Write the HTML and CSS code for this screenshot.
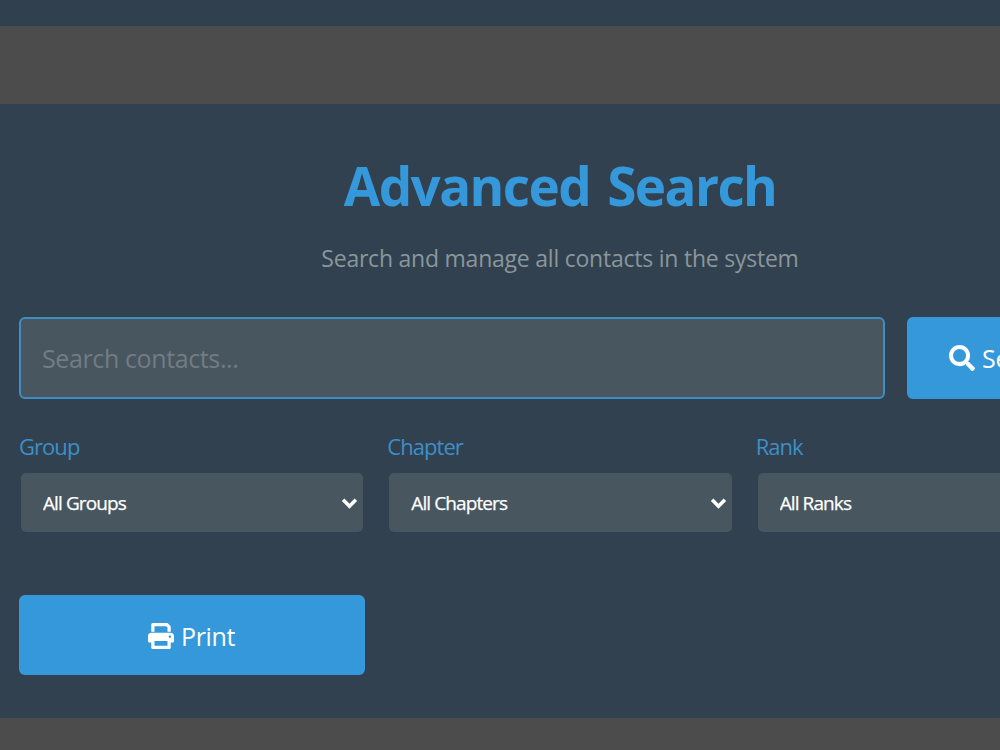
FILE: index.html
```html
<!DOCTYPE html>
<html lang="en">
<head>
    <meta charset="UTF-8">
    <meta name="viewport" content="width=device-width, initial-scale=1.0">
    <title>Advanced Search</title>
    <link rel="stylesheet" href="styles.css">
</head>
<body>
    <div class="top-bar"></div>
    <div class="search-section">
        <div class="search-container">
            <h1>Advanced Search</h1>
            <p class="subtitle">Search and manage all contacts in the system</p>
            <div class="search-bar">
                <input type="text" class="search-input" placeholder="Search contacts...">
                <button class="btn search-btn">
                    <svg class="icon" viewBox="0 0 512 512"><path d="M505 442.7L405.3 343c-4.5-4.5-10.6-7-17-7H372c27.6-35.3 44-79.7 44-128C416 93.1 322.9 0 208 0S0 93.1 0 208s93.1 208 208 208c48.3 0 92.7-16.4 128-44v16.3c0 6.4 2.5 12.5 7 17l99.7 99.7c9.4 9.4 24.6 9.4 33.9 0l28.3-28.3c9.4-9.4 9.4-24.6.1-34zM208 336c-70.7 0-128-57.2-128-128 0-70.7 57.2-128 128-128 70.7 0 128 57.2 128 128 0 70.7-57.2 128-128 128z"/></svg>
                    <span>Search</span>
                </button>
            </div>
            <div class="filters">
                <div class="filter-group">
                    <label for="group">Group</label>
                    <div class="select-wrap">
                        <select id="group"><option>All Groups</option></select>
                        <svg class="chevron" viewBox="0 0 16 11"><path d="M2 2.5l6 6 6-6"/></svg>
                    </div>
                </div>
                <div class="filter-group">
                    <label for="chapter">Chapter</label>
                    <div class="select-wrap">
                        <select id="chapter"><option>All Chapters</option></select>
                        <svg class="chevron" viewBox="0 0 16 11"><path d="M2 2.5l6 6 6-6"/></svg>
                    </div>
                </div>
                <div class="filter-group">
                    <label for="rank">Rank</label>
                    <div class="select-wrap">
                        <select id="rank"><option>All Ranks</option></select>
                        <svg class="chevron" viewBox="0 0 16 11"><path d="M2 2.5l6 6 6-6"/></svg>
                    </div>
                </div>
            </div>
            <button class="btn print-btn">
                <svg class="icon" viewBox="0 0 512 512"><path d="M448 192H64C28.65 192 0 220.7 0 256v96c0 17.67 14.33 32 32 32h32v96c0 17.67 14.33 32 32 32h320c17.67 0 32-14.33 32-32v-96h32c17.67 0 32-14.33 32-32V256C512 220.7 483.3 192 448 192zM384 448H128v-96h256V448zM432 296c-13.25 0-24-10.75-24-24c0-13.27 10.75-24 24-24s24 10.73 24 24C456 285.3 445.3 296 432 296zM128 64h229.5L384 90.51V170h64V77.25c0-8.484-3.375-16.62-9.375-22.62l-45.25-45.25C387.4 3.375 379.2 0 370.8 0H96C78.34 0 64 14.33 64 32v138h64V64z"/></svg>
                <span>Print</span>
            </button>
        </div>
    </div>
</body>
</html>
```
FILE: styles.css
```css
* {
    box-sizing: border-box;
}

body {
    font-family: "Segoe UI", "Open Sans", "Noto Sans", sans-serif;
    margin: 0;
    background-color: #4c4c4c;
    color: #fff;
    overflow: hidden;
}

.top-bar {
    height: 26px;
    background: #31404f;
}

.search-section {
    height: 614px;
    margin-top: 78px;
    padding: 48px 19px 0;
    background: #32414f;
}

.search-container {
    width: 1082px;
}

h1 {
    margin: 0;
    font-size: 53px;
    line-height: 67px;
    font-weight: bold;
    letter-spacing: -1.6px;
    word-spacing: 5px;
    text-align: center;
    color: #3498db;
}

.subtitle {
    margin: 23px 0 43px;
    font-size: 23px;
    line-height: 32px;
    letter-spacing: -0.23px;
    text-align: center;
    color: #89979c;
}

.search-bar {
    display: flex;
    gap: 22px;
}

.search-input {
    width: 866px;
    height: 82px;
    padding: 0 21px;
    font-family: inherit;
    font-size: 25px;
    letter-spacing: -0.38px;
    color: #fff;
    background: #485660;
    border: 2px solid #3f8dc2;
    border-radius: 6px;
}

.search-input::placeholder {
    color: #737c84;
}

.btn {
    display: flex;
    align-items: center;
    justify-content: center;
    gap: 7px;
    padding: 2px 0 0;
    font-family: inherit;
    font-size: 25px;
    letter-spacing: -0.4px;
    color: #fff;
    background: #3498db;
    border: none;
    border-radius: 6px;
    cursor: pointer;
}

.search-btn {
    flex: 1;
    padding: 0;
}

.icon {
    width: 26px;
    height: 26px;
    fill: currentColor;
}

.filters {
    display: grid;
    grid-template-columns: repeat(3, 1fr);
    gap: 23px;
    margin-top: 31px;
}

.filter-group label {
    display: block;
    margin-bottom: 11px;
    font-size: 22px;
    line-height: 32px;
    letter-spacing: -0.95px;
    color: #3d8fc9;
}

.select-wrap {
    position: relative;
    margin: 0 1px 0 2px;
}

.select-wrap select {
    display: block;
    width: 100%;
    height: 59px;
    padding: 1px 22px 0;
    font-family: inherit;
    font-size: 19px;
    letter-spacing: -0.9px;
    color: #fff;
    -webkit-text-stroke: 0.25px #fff;
    background: #485660;
    border: none;
    border-radius: 5px;
    appearance: none;
}

.chevron {
    position: absolute;
    right: 5px;
    top: 24px;
    width: 17px;
    height: 12px;
    fill: none;
    stroke: #fff;
    stroke-width: 3.4;
}

.print-btn {
    width: 346px;
    height: 80px;
    margin-top: 63px;
    padding-right: 1px;
}
```
